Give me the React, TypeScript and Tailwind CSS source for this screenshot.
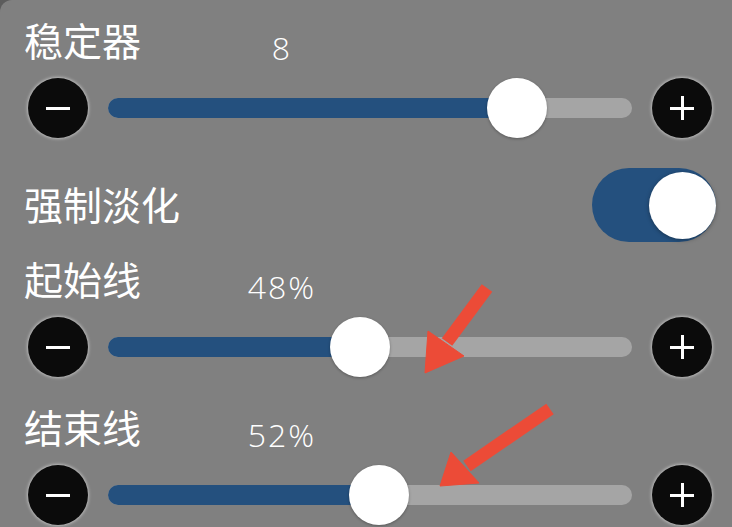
import { useState } from "react"

const cjk = { fontFamily: '"Noto Sans CJK SC", "Noto Sans", sans-serif' }
const num = { fontFamily: '"Open Sans", "Liberation Sans", sans-serif' }

function RoundButton({ sign }: { sign: "minus" | "plus" }) {
  return (
    <button className="relative flex h-[60px] w-[60px] shrink-0 items-center justify-center rounded-full bg-[#0b0b0b] shadow-[0_0_3px_1px_rgba(235,235,235,0.55)]">
      <span className="absolute h-[3px] w-[24px] bg-white" />
      {sign === "plus" && <span className="absolute h-[24px] w-[3px] bg-white" />}
    </button>
  )
}

function LabelRow({ label, value, className }: { label: string; value: string; className?: string }) {
  return (
    <div className={`flex h-[40px] items-baseline pl-[24px] text-white ${className ?? ""}`}>
      <div className="relative -top-[3px] w-[198px] text-[39px] leading-[40px]" style={cjk}>
        {label}
      </div>
      <div className="relative top-[1px] w-[120px] text-center text-[32px] font-light leading-[40px] tracking-[2px]" style={num}>
        {value}
      </div>
    </div>
  )
}

function SliderRow({ pct, className }: { pct: number; className?: string }) {
  return (
    <div className={`flex h-[60px] items-center gap-[20px] pl-[28px] pr-[20px] ${className ?? ""}`}>
      <RoundButton sign="minus" />
      <div className="relative h-[20px] flex-1 rounded-full bg-[#a5a5a5]">
        <div className="absolute inset-y-0 left-0 rounded-full bg-[#24507e]" style={{ width: `${pct}%` }} />
        <div
          className="absolute top-1/2 h-[60px] w-[60px] -translate-x-1/2 -translate-y-1/2 rounded-full bg-white shadow-[0_1px_3px_rgba(0,0,0,0.3)]"
          style={{ left: `${pct}%` }}
        />
      </div>
      <RoundButton sign="plus" />
    </div>
  )
}

export default function App() {
  const [fade, setFade] = useState(true)

  return (
    <div className="h-[527px] w-[732px] overflow-hidden bg-[#5c5c5c]">
      <div className="relative h-full w-full rounded-tl-[12px] bg-[#808080] pt-[22px]">
        <LabelRow label="稳定器" value="8" />
        <SliderRow pct={78} className="mt-[16px]" />

        {/* 强制淡化 */}
        <div className="mt-[30px] flex h-[74px] items-center justify-between pl-[24px] pr-[16px]">
          <div className="relative -top-[2px] text-[39px] leading-none text-white" style={cjk}>
            强制淡化
          </div>
          <button
            onClick={() => setFade(!fade)}
            className={`flex h-[74px] w-[124px] items-center rounded-full ${
              fade ? "justify-end bg-[#24507e]" : "justify-start bg-[#a5a5a5]"
            }`}
          >
            <span className="h-[67px] w-[67px] rounded-full bg-white shadow-[0_1px_4px_rgba(0,0,0,0.35)]" />
          </button>
        </div>

        <LabelRow label="起始线" value="48%" className="mt-[19px]" />
        <SliderRow pct={48} className="mt-[16px]" />

        <LabelRow label="结束线" value="52%" className="mt-[32px]" />
        <SliderRow pct={51.8} className="mt-[16px]" />

        {/* annotation arrows */}
        <svg className="pointer-events-none absolute inset-0" width="732" height="527" viewBox="0 0 732 527">
          <g fill="#ec4b37" stroke="#ec4b37">
            <line x1="487" y1="288" x2="447" y2="342" strokeWidth="13" />
            <polygon points="425,373 428,331 464,356" strokeWidth="1" strokeLinejoin="round" />
            <line x1="550" y1="409" x2="467" y2="466" strokeWidth="13" />
            <polygon points="440,486 451,452 479,483" strokeWidth="1" strokeLinejoin="round" />
          </g>
        </svg>
      </div>
    </div>
  )
}
